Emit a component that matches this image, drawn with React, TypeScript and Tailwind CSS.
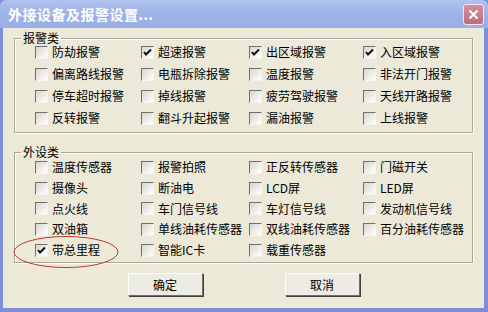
import React from "react";

const font = { fontFamily: '"SimSun","Noto Sans CJK SC",sans-serif' };

function Box({ checked }: { checked?: boolean }) {
  return (
    <span className="relative inline-block w-[13px] h-[13px] shrink-0 border border-t-[#707070] border-l-[#707070] border-b-[#f4f4f0] border-r-[#f4f4f0] bg-gradient-to-br from-[#d8d6cc] to-[#ffffff]">
      {checked && (
        <svg className="absolute left-[1px] top-[1px]" width="9" height="9" viewBox="0 0 9 9">
          <path d="M1 4 L3 6.5 L8 1.5" stroke="#111" strokeWidth="2" fill="none" />
        </svg>
      )}
    </span>
  );
}

function Item({ label, checked }: { label: string; checked?: boolean }) {
  return (
    <div className="flex items-center gap-[4px] text-[12px] text-black whitespace-nowrap">
      <Box checked={checked} />
      <span>{label}</span>
    </div>
  );
}

function Group({ title, items, rowH }: { title: string; items: [string, boolean?][]; rowH: string }) {
  return (
    <fieldset className="border border-[#aca899] shadow-[inset_1px_1px_0_#fff,1px_1px_0_#fff] px-0">
      <legend className="ml-[6px] px-[2px] text-[12px] leading-[14px] text-black">{title}</legend>
      <div className={`grid grid-cols-[106px_108px_114px_1fr] pl-[20px] ${rowH}`}>
        {items.map(([l, c], i) => (
          <Item key={i} label={l} checked={c} />
        ))}
      </div>
    </fieldset>
  );
}

export default function App() {
  const g1: [string, boolean?][] = [
    ["防劫报警"], ["超速报警", true], ["出区域报警", true], ["入区域报警", true],
    ["偏离路线报警"], ["电瓶拆除报警"], ["温度报警"], ["非法开门报警"],
    ["停车超时报警"], ["掉线报警"], ["疲劳驾驶报警"], ["天线开路报警"],
    ["反转报警"], ["翻斗升起报警"], ["漏油报警"], ["上线报警"],
  ];
  const g2: [string, boolean?][] = [
    ["温度传感器"], ["报警拍照"], ["正反转传感器"], ["门磁开关"],
    ["摄像头"], ["断油电"], ["LCD屏"], ["LED屏"],
    ["点火线"], ["车门信号线"], ["车灯信号线"], ["发动机信号线"],
    ["双油箱"], ["单线油耗传感器"], ["双线油耗传感器"], ["百分油耗传感器"],
    ["带总里程", true], ["智能IC卡"], ["载重传感器"],
  ];
  return (
    <div className="relative w-[488px] h-[312px] bg-[#7c8ed8] flex flex-col" style={font}>
      <div className="h-[28px] flex items-center justify-between pl-[8px] pr-[4px] bg-gradient-to-b from-[#b0c2ee] via-[#9db2e6] to-[#9aafe4] rounded-t-[6px]">
        <span className="text-white text-[14px] font-bold tracking-[0.5px]">外接设备及报警设置...</span>
        <span className="w-[21px] h-[21px] rounded-[3px] border border-[#f0e6ea] bg-gradient-to-b from-[#d58f9c] to-[#bb6f80] flex items-center justify-center">
          <svg width="11" height="11" viewBox="0 0 11 11">
            <path d="M1.5 1.5 L9.5 9.5 M9.5 1.5 L1.5 9.5" stroke="#fff" strokeWidth="2" />
          </svg>
        </span>
      </div>
      <div className="flex-1 ml-[3px] mr-[4px] mb-[4px] bg-[#ece9d8] px-[11px] pt-[3px] flex flex-col">
        <Group title="报警类" items={g1} rowH="-mt-[4px] pb-[3px] [&>div]:h-[22px]" />
        <div className="h-[12px]" />
        <Group title="外设类" items={g2} rowH="-mt-[2px] pb-[2px] [&>div]:h-[20.7px]" />
        <div className="flex justify-center gap-[82px] mt-[10px]">
          <button className="w-[75px] h-[23px] text-[12px] bg-[#ecebe4] border border-t-white border-l-white border-b-[#716f64] border-r-[#716f64] shadow-[1px_1px_0_#404040]">确定</button>
          <button className="w-[75px] h-[23px] text-[12px] bg-[#ecebe4] border border-t-white border-l-white border-b-[#716f64] border-r-[#716f64] shadow-[1px_1px_0_#404040]">取消</button>
        </div>
      </div>
      <svg className="absolute left-0 top-0 pointer-events-none" width="488" height="312">
        <ellipse cx="66" cy="252" rx="52" ry="15.5" fill="none" stroke="#b83a3a" strokeWidth="1" />
      </svg>
    </div>
  );
}
